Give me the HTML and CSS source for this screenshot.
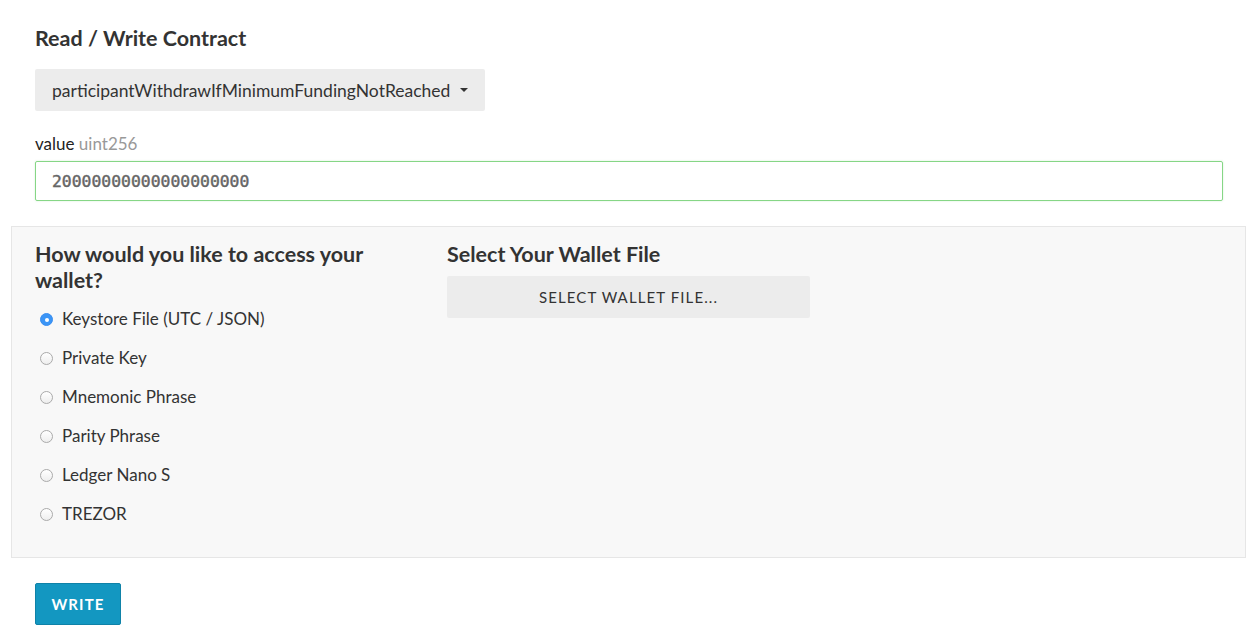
FILE: index.html
```html
<!DOCTYPE html>
<html>
<head>
<meta charset="utf-8">
<link rel="stylesheet" href="styles.css">
</head>
<body>
<div class="page">
  <section class="contract">
    <h2 class="title">Read / Write Contract</h2>
    <button class="dropdown">participantWithdrawIfMinimumFundingNotReached <span class="caret"></span></button>
    <label class="field-label">value <span class="type">uint256</span></label>
    <div class="input">20000000000000000000</div>
  </section>

  <section class="panel">
    <div class="col col-left">
      <h3 class="heading">How would you like to access your wallet?</h3>
      <ul class="radios">
        <li class="radio-row"><span class="radio checked"></span>Keystore File (UTC / JSON)</li>
        <li class="radio-row"><span class="radio"></span>Private Key</li>
        <li class="radio-row"><span class="radio"></span>Mnemonic Phrase</li>
        <li class="radio-row"><span class="radio"></span>Parity Phrase</li>
        <li class="radio-row"><span class="radio"></span>Ledger Nano S</li>
        <li class="radio-row"><span class="radio"></span>TREZOR</li>
      </ul>
    </div>
    <div class="col col-right">
      <h3 class="heading">Select Your Wallet File</h3>
      <button class="file-btn">SELECT WALLET FILE...</button>
    </div>
  </section>

  <div class="actions">
    <button class="write-btn">WRITE</button>
  </div>
</div>
</body>
</html>
```

FILE: styles.css
```css
* { box-sizing: border-box; }
html, body { margin: 0; padding: 0; background: #fff; }
body {
  font-family: Lato, "Open Sans", sans-serif;
  color: #333;
  font-size: 17px;
}
.page { padding: 0 11px; }

.contract { padding: 24px 23px 0 24px; }
.title {
  margin: 0;
  font-size: 21.5px;
  line-height: 28px;
  font-weight: 700;
  color: #333;
}
.dropdown {
  display: flex;
  align-items: center;
  margin-top: 17px;
  height: 42px;
  width: 450px;
  padding: 0 17px;
  background: #ececec;
  border: none;
  border-radius: 2px;
  font-family: Lato, sans-serif;
  font-size: 17.5px;
  color: #333;
  letter-spacing: 0;
  white-space: nowrap;
}
.caret {
  display: inline-block;
  width: 0; height: 0;
  margin-left: 10px;
  border-left: 4px solid transparent;
  border-right: 4px solid transparent;
  border-top: 4px solid #333;
}
.field-label {
  display: block;
  margin-top: 23px;
  font-size: 17px;
  line-height: 20px;
  color: #222;
}
.type { color: #999; }
.input {
  margin-top: 7px;
  height: 40px;
  border: 1px solid #86d686;
  border-radius: 2px;
  box-shadow: 0 0 2px rgba(120, 210, 120, 0.35);
  padding: 0 16px;
  display: flex;
  align-items: center;
  font-family: "DejaVu Sans Mono", "Liberation Mono", monospace;
  font-size: 16.4px;
  font-weight: 400;
  -webkit-text-stroke: 0.45px #666;
  color: #666;
}

.panel {
  margin-top: 25px;
  background: #f8f8f8;
  border: 1px solid #e6e6e6;
  padding: 14px 8px 24px 8px;
  display: flex;
}
.col { padding: 0 15px; }
.col-left { width: 412px; flex: none; }
.col-right { flex: 1; }
.heading {
  margin: 0;
  font-size: 21.5px;
  line-height: 26px;
  font-weight: 700;
  color: #333;
}
.radios {
  list-style: none;
  margin: 6px 0 0 0;
  padding: 0;
}
.radio-row {
  height: 39px;
  display: flex;
  align-items: center;
  font-size: 17px;
  color: #333;
}
.radio {
  width: 13px; height: 13px;
  border-radius: 50%;
  border: 1px solid #aaa;
  background: linear-gradient(#fff, #eee);
  margin: 2px 9px 0 5px;
  flex: none;
  position: relative;
}
.radio.checked {
  border-color: #3a8ef0;
  background: #3b95f6;
}
.radio.checked::after {
  content: "";
  position: absolute;
  left: 3.5px; top: 3.5px;
  width: 4px; height: 4px;
  border-radius: 50%;
  background: #fff;
}
.file-btn {
  margin-top: 9px;
  width: 363px;
  height: 42px;
  background: #ececec;
  border: none;
  border-radius: 2px;
  font-family: Lato, sans-serif;
  font-size: 15px;
  letter-spacing: 1.1px;
  color: #333;
}

.actions { padding: 25px 24px 0 24px; }
.write-btn {
  width: 86px;
  height: 42px;
  background: #1397c1;
  border: 1px solid #0f82a8;
  border-radius: 2px;
  color: #fff;
  font-family: Lato, sans-serif;
  font-weight: 700;
  font-size: 15px;
  letter-spacing: 1.1px;
}
```
